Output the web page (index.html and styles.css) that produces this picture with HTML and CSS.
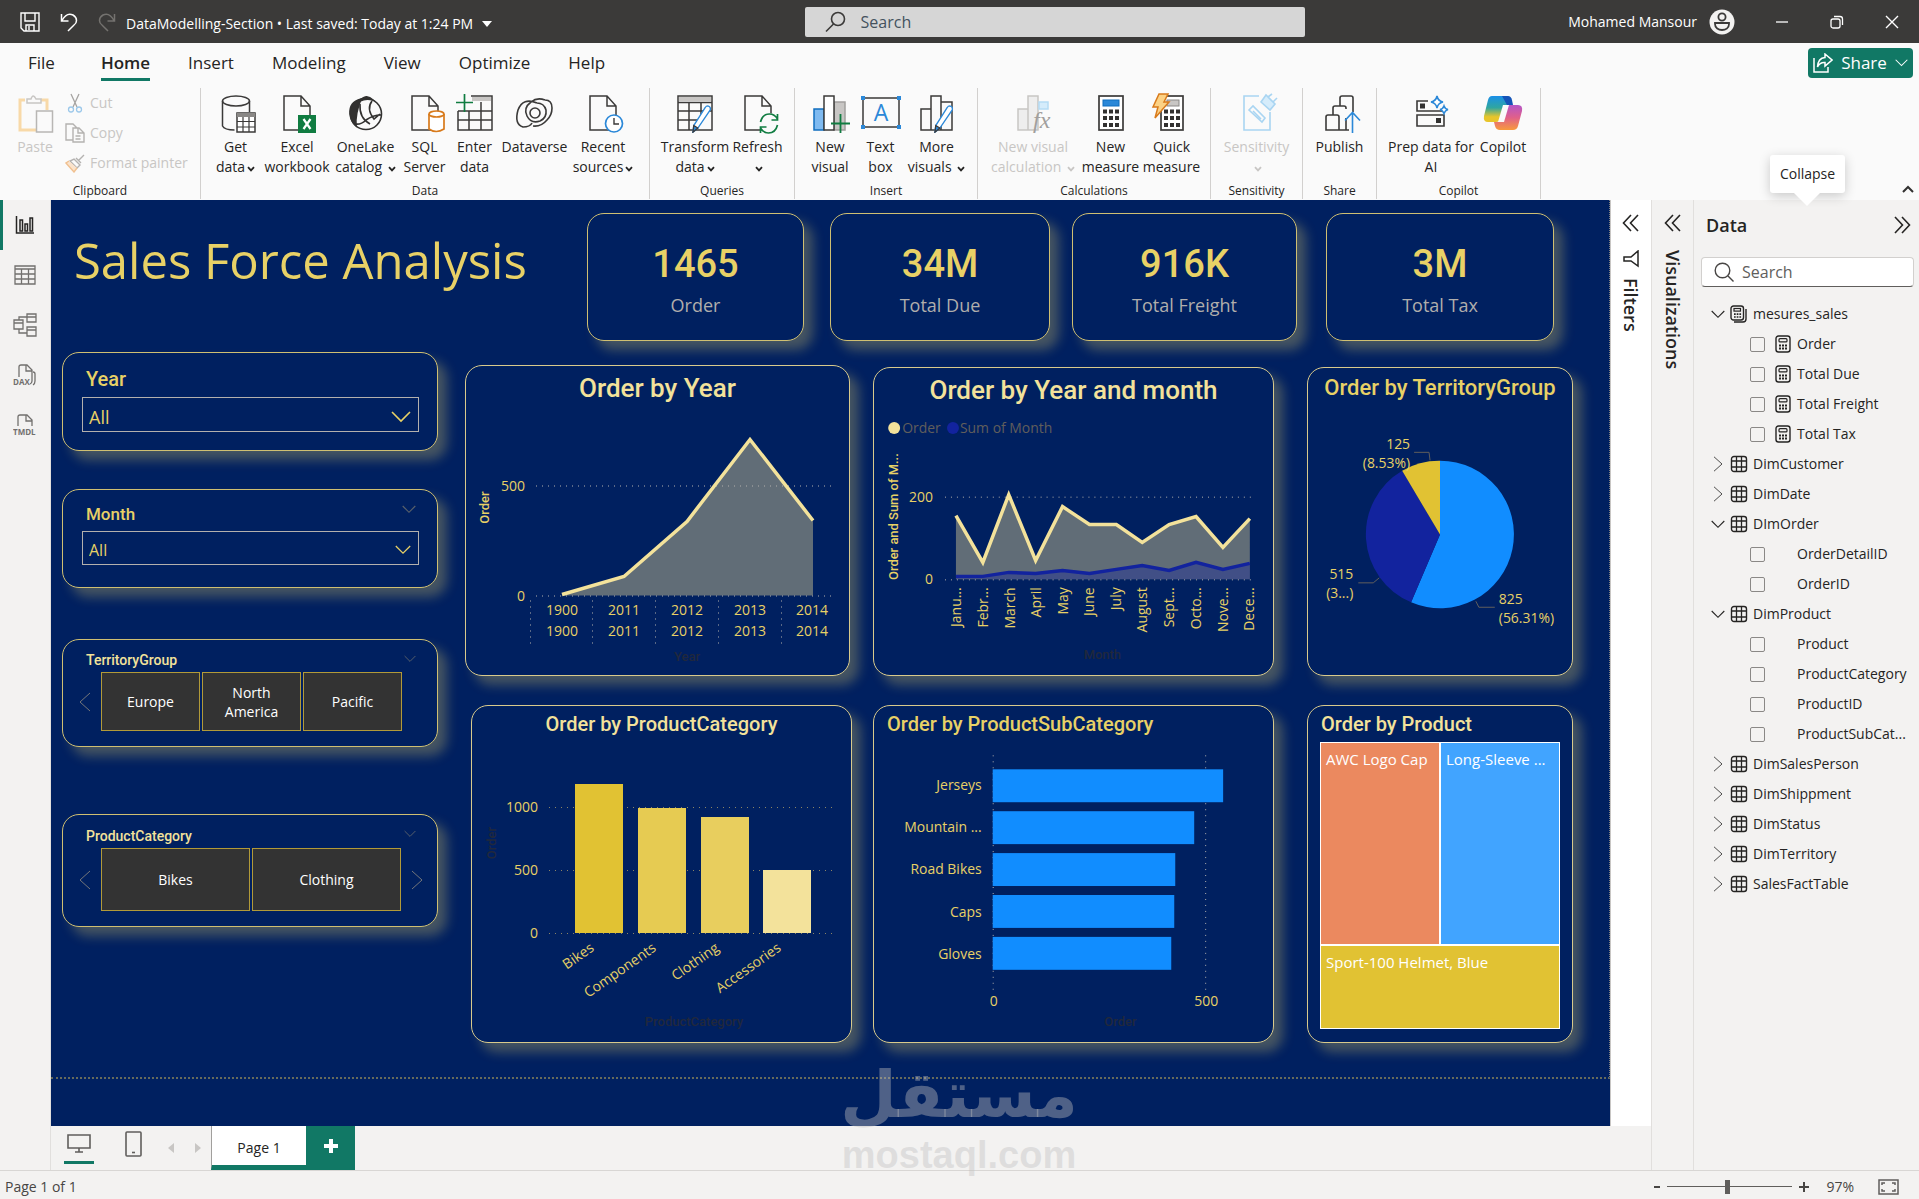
FILE: index.html
```html
<!DOCTYPE html>
<html lang="en">
<head>
<meta charset="utf-8">
<title>DataModelling-Section</title>
<meta name="viewport" content="width=device-width, initial-scale=1">
<link rel="stylesheet" href="styles.css">
</head>
<body>
<svg class="defs" aria-hidden="true">
  <symbol id="chev" viewBox="0 0 8 6"><path d="M1 1.2 4 4.4 7 1.2" fill="none" stroke="currentColor" stroke-width="1.8"/></symbol>
  <symbol id="down" viewBox="0 0 20 12"><path d="M1 1 10 10 19 1" fill="none" stroke="currentColor" stroke-width="1.6"/></symbol>
  <symbol id="left" viewBox="0 0 12 20"><path d="M11 1 1 10 11 19" fill="none" stroke="currentColor"/></symbol>
  <symbol id="dbl" viewBox="0 0 18 18"><path d="M9 1 1.500 9 9 17M16 1 8.500 9 16 17" fill="none" stroke="currentColor" stroke-width="1.600"/></symbol>
  <symbol id="table" viewBox="0 0 18 18"><rect x="1.500" y="1.500" width="15" height="15" rx="2.500" fill="none" stroke="currentColor" stroke-width="1.400"/><path d="M6.500 1.500v15M11.500 1.500v15M1.500 6h15M1.500 12h15" stroke="currentColor" stroke-width="1.300"/></symbol>
  <symbol id="calc" viewBox="0 0 18 18"><rect x="2" y="1" width="14" height="16" rx="2.500" fill="none" stroke="currentColor" stroke-width="1.400"/><rect x="5" y="3.700" width="8" height="3.200" rx="1" fill="none" stroke="currentColor" stroke-width="1.200"/><path d="M5 10.500h2m1 0h2m1 0h2M5 13.500h2m1 0h2m1 0h2" stroke="currentColor" stroke-width="1.900"/></symbol>
  <symbol id="calcs" viewBox="0 0 18 18"><rect x="1" y="1" width="12.500" height="14" rx="2.500" fill="none" stroke="currentColor" stroke-width="1.400"/><path d="M4 17h9q3 0 3-3V4" fill="none" stroke="currentColor" stroke-width="1.400"/><rect x="4" y="3.500" width="6.500" height="2.600" fill="none" stroke="currentColor" stroke-width="1.200"/><path d="M4 9.200h1.700m1 0h1.700m1 0h1.700M4 12h1.700m1 0h1.700m1 0h1.700" stroke="currentColor" stroke-width="1.700"/></symbol>
  <symbol id="doc" viewBox="0 0 40 40"><path d="M24 2H7v34h26V12zM24 2v10h9" fill="none" stroke="currentColor" stroke-width="1.500"/></symbol>
  <symbol id="pencil" viewBox="0 0 24 34"><path d="M19 1q4 1 3 5L7 28l-6 5 1-8L16 3q1-2 3-2z" fill="#fff" stroke="#2b88d8" stroke-width="1.600"/><path d="M2 25l5 3-6 5z" fill="#2b88d8"/></symbol>
</svg>

<header class="titlebar">
  <div class="quick">
    <button aria-label="Save"><svg width="20" height="20" viewBox="0 0 20 20" fill="none" stroke="#fff" stroke-width="1.400"><path d="M1 1h18v18H4l-3-3zM5 1v8h10V1M6 19v-6h8v6M9 14v4"/></svg></button>
    <button aria-label="Undo"><svg width="18" height="20" viewBox="0 0 18 20" fill="none" stroke="#fff" stroke-width="1.500"><path d="M1.500 2v7h7M2 8.500C5 3 9 1 13 3c5 3 4 8 1 10L8 19"/></svg></button>
    <button aria-label="Redo"><svg width="18" height="20" viewBox="0 0 18 20" fill="none" stroke="#74726f" stroke-width="1.500"><path d="M16.500 2v7h-7M16 8.500C13 3 9 1 5 3C0 6 1 11 4 13l6 6"/></svg></button>
    <button class="doc-name">DataModelling-Section • Last saved: Today at 1:24 PM <svg width="10" height="6" viewBox="0 0 10 6"><path d="M0 0h10L5 6z" fill="#fff"/></svg></button>
  </div>
  <label class="top-search"><svg width="22" height="22" viewBox="0 0 22 22" fill="none" stroke="#3b3a39" stroke-width="1.600"><circle cx="13" cy="8" r="6.500"/><path d="M8.500 13 1 20.500"/></svg><input type="text" placeholder="Search" aria-label="Search"></label>
  <div class="account">
    <span>Mohamed Mansour</span>
    <svg class="avatar" width="26" height="26" viewBox="0 0 26 26"><circle cx="13" cy="13" r="12.500" fill="#f3f2f1"/><circle cx="13" cy="8" r="3.600" fill="none" stroke="#3b3a39" stroke-width="1.800"/><path d="M6 14h14v1c0 8-14 8-14 0z" fill="none" stroke="#3b3a39" stroke-width="1.800"/></svg>
    <button aria-label="Minimize"><svg width="14" height="14" viewBox="0 0 14 14"><path d="M1 7h12" stroke="#fff" stroke-width="1.300"/></svg></button>
    <button aria-label="Restore"><svg width="14" height="14" viewBox="0 0 14 14" fill="none" stroke="#fff" stroke-width="1.300"><rect x="1" y="4" width="9" height="9" rx="2"/><path d="M4 1.500h6q2.500 0 2.500 2.500v6"/></svg></button>
    <button aria-label="Close"><svg width="14" height="14" viewBox="0 0 14 14"><path d="M1 1l12 12M13 1 1 13" stroke="#fff" stroke-width="1.400"/></svg></button>
  </div>
</header>

<nav class="tabs">
  <a href="#file" class="file">File</a><a href="#home" class="on">Home</a><a href="#insert">Insert</a><a href="#modeling">Modeling</a><a href="#view">View</a><a href="#optimize">Optimize</a><a href="#help">Help</a>
  <button class="share"><svg width="20" height="20" viewBox="0 0 20 20" fill="none" stroke="#fff" stroke-width="1.500"><path d="M1 5v14h14v-5M12 1l7 6-7 6V9.500Q7 9 4.500 14 5 5 12 4.500z"/></svg>Share<svg width="13" height="8"><use href="#down"/></svg></button>
</nav>

<section class="ribbon" aria-label="Ribbon">
  <div class="group g-clip">
    <div class="tools">
      <button class="tool w-paste off"><svg class="ic" viewBox="0 0 40 40" fill="none"><path d="M10 6H5v30h16M26 6h6v10" stroke="#f8d9a8" stroke-width="3"/><path d="M12 9V5h4q2-6 5 0h5v4z" stroke="#c8c6c4" stroke-width="1.500"/><rect x="21.500" y="17" width="16" height="21" fill="#fafafa" stroke="#b8b6b4" stroke-width="1.500"/></svg>Paste</button>
      <div class="mini off">
        <button><svg width="20" height="20" viewBox="0 0 20 20" fill="none" stroke="#a6a4a2" stroke-width="1.300"><path d="M6 1l6 13M14 1 8 14"/><circle cx="6" cy="16.500" r="2.500" stroke="#9cc8ea"/><circle cx="14" cy="16.500" r="2.500" stroke="#9cc8ea"/></svg>Cut</button>
        <button><svg width="20" height="20" viewBox="0 0 20 20" fill="none" stroke="#b4b2b0" stroke-width="1.400"><path d="M8 17H1V1h7l4 4M8 5h6l5 5v9H8zM13 5v5h6M10.500 13h5M10.500 16h5"/></svg>Copy</button>
        <button><svg width="20" height="20" viewBox="0 0 20 20" fill="none" stroke="#b4b2b0" stroke-width="1.400"><path d="M19 2l-6 6M11 5l5 5M9 6l6 6-3 3-7-7z"/><path d="M4 8 1 10l8 9 3-4" stroke="#f0c090" fill="#fbe3cb"/></svg>Format painter</button>
      </div>
    </div>
    <h2>Clipboard</h2>
  </div>
  <div class="group g-data">
    <div class="tools">
      <button class="tool w57"><svg class="ic" viewBox="0 0 40 40" fill="none" stroke="#3b3a39" stroke-width="1.500"><path d="M6.500 7v25q2 4 12 4M33.500 7v11"/><ellipse cx="20" cy="7" rx="13.500" ry="5"/><rect x="21" y="19" width="18" height="19" fill="#fff"/><path d="M21 21h18" stroke-width="4" stroke="#8a8886"/><path d="M21 27.500h18M21 33h18M27 23v15M33 23v15" stroke-width="1.200"/></svg>Get<br>data<svg class="cv"><use href="#chev"/></svg></button>
      <button class="tool w66"><svg class="ic" viewBox="0 0 40 40"><use href="#doc"/><rect x="21" y="21" width="18" height="18" fill="#107c41"/><path d="M26.500 25l7 10M33.500 25l-7 10" stroke="#fff" stroke-width="2.200"/></svg>Excel<br>workbook</button>
      <button class="tool w71"><svg class="ic" viewBox="0 0 40 40" fill="none" stroke="#323130" stroke-width="1.600"><circle cx="20" cy="20" r="15.500"/><path d="M15 5Q3 8 4 20q1 8 6 12Q9 20 15 5z" fill="#323130"/><path d="M14 7Q20-1 27 6q-7-2-13 1z" fill="#323130"/><path d="M14 10q-1 14 10 20M26 7q-6 8 2 18l6-5M9 30q6 1 11-4 7-5 15-5"/></svg>OneLake<br>catalog <svg class="cv"><use href="#chev"/></svg></button>
      <button class="tool w47"><svg class="ic" viewBox="0 0 40 40" fill="none"><use href="#doc"/><path d="M24 20v15q7 5 15 0V20" fill="#fff" stroke="#d87a1b" stroke-width="1.700"/><ellipse cx="31.500" cy="20" rx="7.500" ry="3" fill="#fff" stroke="#d87a1b" stroke-width="1.700"/></svg>SQL<br>Server</button>
      <button class="tool w53"><svg class="ic" viewBox="0 0 40 40" fill="none" stroke="#3b3a39" stroke-width="1.500"><path d="M16 2h21v34H3V17M3 26h34M3 17h34M14 17v19M26 8v28"/><path d="M17 5h19" stroke="#c8c6c4" stroke-width="4"/><path d="M9.500 0v18M1 8.500h17" stroke="#107c41" stroke-width="1.700"/></svg>Enter<br>data</button>
      <button class="tool w67"><svg class="ic" viewBox="0 0 40 40" fill="none" stroke="#3b3a39" stroke-width="1.600"><path d="M30 6Q22 3 16 8 8 14 12 22q4 8 13 5 7-3 6-11-2-7-9-7M30 6q7 0 7 8 0 7-5 12-6 7-14 6M22 9Q8 3 3 16q-4 14 5 17 7 0 9-4"/><circle cx="20" cy="19" r="5"/></svg>Dataverse</button>
      <button class="tool w70"><svg class="ic" viewBox="0 0 40 40"><use href="#doc"/><circle cx="31" cy="29.500" r="8.500" fill="#fff" stroke="#2b88d8" stroke-width="1.700"/><path d="M31 24v6h5" fill="none" stroke="#3b3a39" stroke-width="1.400"/></svg>Recent<br>sources<svg class="cv"><use href="#chev"/></svg></button>
    </div>
    <h2>Data</h2>
  </div>
  <div class="group g-query">
    <div class="tools">
      <button class="tool w71"><svg class="ic" viewBox="0 0 40 40" fill="none" stroke="#3b3a39" stroke-width="1.500"><rect x="3" y="2" width="34" height="34"/><path d="M4 5h32" stroke="#c8c6c4" stroke-width="4"/><path d="M3 8.500h34M3 17h34M3 26h20M14 8v28M26 8v14"/><use href="#pencil" x="14" y="11" width="26" height="28"/></svg>Transform<br>data<svg class="cv"><use href="#chev"/></svg></button>
      <button class="tool w54"><svg class="ic" viewBox="0 0 40 40" fill="none"><use href="#doc"/><circle cx="31" cy="29.500" r="10.500" fill="#fafafa"/><path d="M22.500 28q2-8 9-8 5 0 8 5M39.500 20v6h-6M39.500 31q-2 8-9 8-5 0-8-5M22.500 39v-6h6" stroke="#107c41" stroke-width="1.700"/></svg>Refresh<br><svg class="cv"><use href="#chev"/></svg></button>
    </div>
    <h2>Queries</h2>
  </div>
  <div class="group g-insert">
    <div class="tools">
      <button class="tool w51"><svg class="ic" viewBox="0 0 40 40" stroke-width="1.500"><rect x="24" y="8" width="11" height="28" fill="#c8c6c4" stroke="#a19f9d"/><rect x="4" y="15" width="10" height="21" fill="#7fbaf0" stroke="#106ebe"/><rect x="14" y="2" width="10" height="34" fill="#fff" stroke="#3b3a39"/><path d="M30.500 20v19M21 29.500h19" stroke="#107c41" stroke-width="1.800"/></svg>New<br>visual</button>
      <button class="tool w50"><svg class="ic" viewBox="0 0 40 40"><rect x="2" y="4" width="36" height="29" fill="none" stroke="#3b3a39" stroke-width="1.500"/><path d="M0 2h4v4H0zM36 2h4v4h-4zM0 31h4v4H0zM36 31h4v4h-4z" fill="#2b88d8"/><text x="20" y="27" text-anchor="middle" font-size="23" fill="#2b88d8">A</text></svg>Text<br>box</button>
      <button class="tool w62"><svg class="ic" viewBox="0 0 40 40" fill="none" stroke="#3b3a39" stroke-width="1.500"><path d="M4 15h10v21H4zM14 2h10v34H14zM24 8h11v28H24z"/><use href="#pencil" x="14" y="11" width="26" height="28"/></svg>More<br>visuals <svg class="cv"><use href="#chev"/></svg></button>
    </div>
    <h2>Insert</h2>
  </div>
  <div class="group g-calc">
    <div class="tools">
      <button class="tool w91 off"><svg class="ic" viewBox="0 0 40 40" stroke-width="1.500"><path d="M5 15h10v21H5zM15 2h10v34H15z" fill="#eee" stroke="#c8c6c4"/><path d="M26 8h9v7h-9z" fill="#d5ecfb" stroke="#b5dcf5"/><text x="20" y="34" font-size="24" font-style="italic" fill="#a19f9d" class="serif">fx</text></svg>New visual<br>calculation <svg class="cv"><use href="#chev"/></svg></button>
      <button class="tool w64"><svg class="ic" viewBox="0 0 40 40"><rect x="8" y="2" width="24" height="34" fill="#fff" stroke="#3b3a39" stroke-width="1.700"/><rect x="12" y="6" width="16" height="6" fill="#2b88d8" stroke="#106ebe"/><path d="M12 17.500h4m2 0h4m2 0h4M12 24h4m2 0h4m2 0h4M12 31h4m2 0h4m2 0h4" stroke="#323130" stroke-width="4"/></svg>New<br>measure</button>
      <button class="tool w58"><svg class="ic" viewBox="0 0 40 40"><rect x="9" y="2" width="22" height="34" fill="#fff" stroke="#3b3a39" stroke-width="1.700"/><rect x="15" y="6" width="12" height="6" fill="#c8c6c4" stroke="#8a8886"/><path d="M12 17.500h4m2 0h4m2 0h4M12 24h4m2 0h4m2 0h4M12 31h4m2 0h4m2 0h4" stroke="#323130" stroke-width="4"/><path d="M7 0h9l-4 8h5L3 24l3-11H1z" fill="#fcd285" stroke="#d87a1b" stroke-width="1.500"/></svg>Quick<br>measure</button>
    </div>
    <h2>Calculations</h2>
  </div>
  <div class="group g-sens">
    <div class="tools">
      <button class="tool w91 off"><svg class="ic" viewBox="0 0 40 40" fill="none" stroke="#a9d5f2" stroke-width="1.600"><path d="M22 2H7v34h26V18"/><path d="M24 8l5-7 9 9-5 6zM31 3l4-3M36 8l4-4" fill="#d5ecfb"/><path d="M12 16l4-4 12 12-3 4zM16 17l8 8"/></svg>Sensitivity<br><svg class="cv"><use href="#chev"/></svg></button>
    </div>
    <h2>Sensitivity</h2>
  </div>
  <div class="group g-share">
    <div class="tools">
      <button class="tool w64"><svg class="ic" viewBox="0 0 40 40" fill="none" stroke="#3b3a39" stroke-width="1.600"><path d="M33 18V4q0-2-2-2H22q-2 0-2 2v8M26 15v-1q0-2-2-2h-9q-2 0-2 2v7M6 36V23q0-2 2-2h9q2 0 2 2v13zM19 36h7V24M26 36h3"/><path d="M32.500 39V19M25 26.500l7.500-8 7.500 8" stroke="#2b88d8"/></svg>Publish</button>
    </div>
    <h2>Share</h2>
  </div>
  <div class="group g-copilot">
    <div class="tools">
      <button class="tool w96"><svg class="ic" viewBox="0 0 40 40" fill="none" stroke="#3b3a39" stroke-width="1.600"><path d="M17 7H6v10h27V15M6 21h27v11H6z"/><path d="M9 9.500h5v5H9zM25 24h5v5h-5z" fill="#323130" stroke="none"/><path d="M26 2q1 5 6 6-5 1-6 6-1-5-6-6 5-1 6-6zM33 12q1 3 4 3.500-3 1-4 4-1-3-4-4 3-.5 4-3.500z" fill="#fff" stroke="#2b88d8"/></svg>Prep data for<br>AI</button>
      <button class="tool w48"><svg class="ic" viewBox="0 0 40 40"><defs><linearGradient id="ga" x1="0" y1="0" x2="0" y2="1"><stop offset="0" stop-color="#1a8fe8"/><stop offset=".45" stop-color="#2fa6a0"/><stop offset=".8" stop-color="#e8c52a"/></linearGradient><linearGradient id="gb" x1="0" y1="0" x2="0" y2="1"><stop offset="0" stop-color="#b455c8"/><stop offset=".5" stop-color="#e0608a"/><stop offset="1" stop-color="#f89a3c"/></linearGradient></defs><path d="M9 2h14q3 0 4 3l2 6h-4q-4 0-5 4l-3 10q-1 3-4 3H5q-5 0-4-6L5 6q1-4 4-4z" fill="url(#ga)"/><path d="M19 2h6q3 0 4 4l1 5h-6z" fill="#1454b8"/><path d="M27 11h8q5 0 4 6l-4 15q-1 4-5 4H17q-4 0-5-4l-1-4h3q3 0 4-3l4-11q1-3 5-3z" fill="url(#gb)"/><path d="M20 11h6l-5 17h-6z" fill="#fafafa"/></svg>Copilot</button>
    </div>
    <h2>Copilot</h2>
  </div>
  <button class="fold" aria-label="Collapse the ribbon"><svg width="12" height="8" viewBox="0 0 12 8"><path d="M1 7l5-5 5 5" fill="none" stroke="#323130" stroke-width="2"/></svg></button>
</section>

<main class="main">
  <nav class="rail" aria-label="Views">
    <a href="#report" class="on" aria-label="Report view"><svg width="20" height="20" viewBox="0 0 20 20" fill="none" stroke="#252423" stroke-width="1.500"><path d="M1.500 1v17H19"/><path d="M5 5h2.500v11H5zM10 9h2.500v7H10zM15 3h2.500v13H15z"/></svg></a>
    <a href="#table" aria-label="Table view"><svg width="22" height="20" viewBox="0 0 22 20" fill="none" stroke="#72706e" stroke-width="1.300"><path d="M1 1h20v18H1zM1 4h20M1 9h20M1 14h20M7.500 4v15M14.500 4v15"/></svg></a>
    <a href="#model" aria-label="Model view"><svg width="24" height="24" viewBox="0 0 24 24" fill="none" stroke="#72706e" stroke-width="1.300"><path d="M14 1h9v8h-9zM14 4h9M1 7h9v9H1zM1 10h9M14 14h9v9h-9zM14 17h9M14 4H6v3M6 16v4h8"/></svg></a>
    <a href="#dax" aria-label="DAX query view"><svg width="24" height="22" viewBox="0 0 24 22" fill="none" stroke="#72706e" stroke-width="1.300"><path d="M6 13V3q0-2 2-2h6l5 5v11q0 2-2 3M13 1v6h6M20 8q2 0 2 2v7q0 3-2 4"/><text x="0" y="21" font-size="8" font-weight="700" fill="#72706e" stroke="none">DAX</text></svg></a>
    <a href="#tmdl" aria-label="TMDL view"><svg width="24" height="22" viewBox="0 0 24 22" fill="none" stroke="#72706e" stroke-width="1.300"><path d="M5 12V3q0-2 2-2h7l5 5v6M13 1v6h6"/><text x="0" y="21" font-size="8" font-weight="700" fill="#72706e" stroke="none">TMDL</text></svg></a>
  </nav>

  <div class="workspace">
    <div class="stage">
      <div class="canvas">
        <div class="report">
          <div class="top">
            <h1>Sales Force Analysis</h1>
            <div class="kpis">
              <div class="card kpi"><strong>1465</strong><span>Order</span></div>
              <div class="card kpi"><strong>34M</strong><span>Total Due</span></div>
              <div class="card kpi"><strong>916K</strong><span>Total Freight</span></div>
              <div class="card kpi"><strong>3M</strong><span>Total Tax</span></div>
            </div>
          </div>
          <div class="body">
            <div class="slicers">
              <div class="card slicer year">
                <label for="year">Year</label>
                <div class="pick"><select id="year"><option>All</option></select><svg width="20" height="12"><use href="#down"/></svg></div>
              </div>
              <div class="card slicer month">
                <label for="month">Month</label><svg class="hd" width="14" height="9"><use href="#down"/></svg>
                <div class="pick"><select id="month"><option>All</option></select><svg width="16" height="10"><use href="#down"/></svg></div>
              </div>
              <div class="card slicer terr">
                <h3>TerritoryGroup</h3><svg class="hd" width="12" height="8"><use href="#down"/></svg>
                <div class="tiles"><svg width="12" height="20"><use href="#left"/></svg><button>Europe</button><button>North<br>America</button><button>Pacific</button><i></i></div>
              </div>
              <div class="card slicer cat">
                <h3>ProductCategory</h3><svg class="hd" width="12" height="8"><use href="#down"/></svg>
                <div class="tiles"><svg width="12" height="20"><use href="#left"/></svg><button>Bikes</button><button>Clothing</button><svg class="flip" width="12" height="20"><use href="#left"/></svg></div>
              </div>
            </div>

            <div class="charts">
              <div class="card chart c-year">
                <h2 class="big pale">Order by Year</h2>
                <svg class="plot" viewBox="466 408 383 266">
                  <polygon points="562,595 624,577 687,521 750,439 813,520 813,595" fill="#f3e29b" fill-opacity=".4"/>
                  <g class="grid"><path d="M536 485.500h300M536 595.500h300M530.500 600v44M592.500 600v44M655.500 600v44M718.500 600v44M781.500 600v44"/></g>
                  <polyline points="562,594 624,576 687,521 750,439 813,520" fill="none" stroke="#f3e29b" stroke-width="3.500"/>
                  <g class="end"><text x="525" y="490">500</text><text x="525" y="600">0</text></g>
                  <g class="mid"><text x="562" y="614">1900</text><text x="624" y="614">2011</text><text x="687" y="614">2012</text><text x="750" y="614">2013</text><text x="812" y="614">2014</text>
                  <text x="562" y="635">1900</text><text x="624" y="635">2011</text><text x="687" y="635">2012</text><text x="750" y="635">2013</text><text x="812" y="635">2014</text>
                  <text x="687" y="660" class="dim">Year</text><text transform="translate(489 507) rotate(-90)" class="axis">Order</text></g>
                </svg>
              </div>
              <div class="card chart c-month">
                <h2 class="big pale">Order by Year and month</h2>
                <svg class="plot" viewBox="874 410 400 266">
                  <circle cx="894" cy="428" r="6" fill="#f3e29b"/><text x="902" y="433" class="leg">Order</text>
                  <circle cx="953" cy="428" r="6" fill="#12239e"/><text x="960" y="433" class="leg">Sum of Month</text>
                  <polygon points="956,580 956,516 983,563 1009,495 1036,561 1063,507 1090,525 1117,525 1143,543 1170,525 1197,517 1224,548 1251,519 1251,580" fill="#f3e29b" fill-opacity=".4"/>
                  <polygon points="956,580 956,577 983,577 1009,573 1036,574 1063,571 1090,574 1117,570 1143,566 1170,571 1197,563 1224,570 1251,564 1251,580" fill="#12239e" fill-opacity=".4"/>
                  <g class="grid"><path d="M945 497.500h312M945 580.500h312"/></g>
                  <polyline points="956,516 983,563 1009,495 1036,561 1063,507 1090,525 1117,525 1143,543 1170,525 1197,517 1224,548 1251,519" fill="none" stroke="#f3e29b" stroke-width="3.500"/>
                  <polyline points="956,577 983,577 1009,573 1036,574 1063,571 1090,574 1117,570 1143,566 1170,571 1197,563 1224,570 1251,564" fill="none" stroke="#12239e" stroke-width="3.500"/>
                  <g class="end"><text x="933" y="502">200</text><text x="933" y="585">0</text>
                  <text transform="translate(961 588) rotate(-90)">Janu...</text><text transform="translate(988 588) rotate(-90)">Febr...</text><text transform="translate(1015 588) rotate(-90)">March</text><text transform="translate(1041 588) rotate(-90)">April</text><text transform="translate(1068 588) rotate(-90)">May</text><text transform="translate(1095 588) rotate(-90)">June</text><text transform="translate(1122 588) rotate(-90)">July</text><text transform="translate(1148 588) rotate(-90)">August</text><text transform="translate(1175 588) rotate(-90)">Sept...</text><text transform="translate(1202 588) rotate(-90)">Octo...</text><text transform="translate(1229 588) rotate(-90)">Nove...</text><text transform="translate(1255 588) rotate(-90)">Dece...</text></g>
                  <g class="mid"><text x="1103" y="660" class="dim">Month</text><text transform="translate(898 517) rotate(-90)" class="axis">Order and Sum of M...</text></g>
                </svg>
              </div>
              <div class="card chart c-terr">
                <h2 class="wide">Order by TerritoryGroup</h2>
                <svg class="plot" viewBox="1308 410 264 266">
                  <path d="M1440 535V461A74 74 0 1 1 1411 603z" fill="#118dff"/>
                  <path d="M1440 535 1411 603A74 74 0 0 1 1402 471z" fill="#12239e"/>
                  <path d="M1440 535 1402 471A74 74 0 0 1 1440 461z" fill="#e1c233"/>
                  <path d="M1414 452.500h15l1 8M1358 583.500h15l6-5M1476 602l3 6h16" fill="none" stroke="#605e5c"/>
                  <g class="end"><text x="1410" y="449">125</text><text x="1410" y="468">(8.53%)</text><text x="1353" y="580">515</text><text x="1353" y="599">(3...)</text></g>
                  <g class="start"><text x="1499" y="605">825</text><text x="1499" y="624">(56.31%)</text></g>
                </svg>
              </div>
              <div class="card chart c-cat">
                <h2 class="pale">Order by ProductCategory</h2>
                <svg class="plot" viewBox="472 742 379 300">
                  <g class="grid warm"><path d="M549 807.500h288M549 870.500h288M549 933.500h288"/></g>
                  <rect x="575" y="784" width="48" height="149" fill="#e1c233"/><rect x="638" y="808" width="48" height="125" fill="#e6cb52"/><rect x="701" y="817" width="48" height="116" fill="#e8ce5e"/><rect x="763" y="870" width="48" height="63" fill="#f3e29b"/>
                  <g class="end"><text x="538" y="812">1000</text><text x="538" y="875">500</text><text x="538" y="938">0</text>
                  <text transform="translate(595 950) rotate(-35)">Bikes</text><text transform="translate(657 950) rotate(-35)">Components</text><text transform="translate(720 950) rotate(-35)">Clothing</text><text transform="translate(782 950) rotate(-35)">Accessories</text></g>
                  <g class="mid"><text x="694" y="1026" class="dim">ProductCategory</text><text transform="translate(496 843) rotate(-90)" class="dim">Order</text></g>
                </svg>
              </div>
              <div class="card chart c-sub">
                <h2 class="lead">Order by ProductSubCategory</h2>
                <svg class="plot" viewBox="874 742 400 300">
                  <g class="grid"><path d="M993.500 755v235M1206.500 755v235"/></g>
                  <g fill="#118dff"><rect x="993" y="769" width="231" height="33"/><rect x="993" y="811" width="202" height="33"/><rect x="993" y="853" width="183" height="33"/><rect x="993" y="895" width="182" height="33"/><rect x="993" y="937" width="179" height="33"/></g>
                  <g class="end"><text x="982" y="790">Jerseys</text><text x="982" y="832">Mountain ...</text><text x="982" y="874">Road Bikes</text><text x="982" y="917">Caps</text><text x="982" y="959">Gloves</text></g>
                  <g class="mid"><text x="994" y="1006">0</text><text x="1207" y="1006">500</text><text x="1121" y="1026" class="dim">Order</text></g>
                </svg>
              </div>
              <div class="card chart c-prod">
                <h2 class="lead pale">Order by Product</h2>
                <div class="treemap"><div class="t1">AWC Logo Cap</div><div class="t2">Long-Sleeve ...</div><div class="t3">Sport-100 Helmet, Blue</div></div>
              </div>
            </div>
          </div>
        </div>
      </div>
      <aside class="pane filters">
        <svg width="18" height="18"><use href="#dbl"/></svg>
        <svg width="18" height="18" viewBox="0 0 18 18"><path d="M16 1v15L9 11H2V7h7z" fill="none" stroke="#252423" stroke-width="1.500"/></svg>
        <h2>Filters</h2>
      </aside>
    </div>
    <div class="pages">
      <button class="view on" aria-label="Desktop layout"><svg width="24" height="19" viewBox="0 0 24 19" fill="none" stroke="#605e5c" stroke-width="1.600"><path d="M1 1h22v13H1zM12 14v4M8 18h8"/></svg></button>
      <button class="view phone" aria-label="Mobile layout"><svg width="17" height="26" viewBox="0 0 17 26" fill="none" stroke="#605e5c" stroke-width="1.600"><rect x="1" y="1" width="15" height="24" rx="1"/><path d="M7 21.500h3"/></svg></button>
      <button class="arrow" aria-label="Previous page"><svg width="6" height="10"><path d="M6 0v10L0 5z" fill="#c8c6c4"/></svg></button>
      <button class="arrow" aria-label="Next page"><svg width="6" height="10"><path d="M0 0v10l6-5z" fill="#c8c6c4"/></svg></button>
      <a href="#page1" class="page">Page 1</a>
      <button class="add" aria-label="New page"><svg width="14" height="14"><path d="M7 0v14M0 7h14" stroke="#fff" stroke-width="4"/></svg></button>
    </div>
    <div class="watermark"><span lang="ar" dir="rtl">مستقل</span><b>mostaql.com</b></div>
  </div>

  <aside class="pane viz">
    <svg width="18" height="18"><use href="#dbl"/></svg>
    <h2>Visualizations</h2>
  </aside>

  <aside class="data">
    <div class="tip">Collapse</div>
    <header><h2>Data</h2><svg class="flip" width="18" height="18"><use href="#dbl"/></svg></header>
    <label class="find"><svg width="20" height="20" viewBox="0 0 20 20" fill="none" stroke="#484644" stroke-width="1.400"><circle cx="8.500" cy="8.500" r="7.300"/><path d="M14 14l5.500 5.500"/></svg><input type="text" placeholder="Search" aria-label="Search fields"></label>
    <ul class="tree">
      <li><svg class="open"><use href="#down"/></svg><svg class="ti"><use href="#calcs"/></svg>mesures_sales</li>
      <li class="kid"><label><input type="checkbox"><svg class="ti"><use href="#calc"/></svg>Order</label></li>
      <li class="kid"><label><input type="checkbox"><svg class="ti"><use href="#calc"/></svg>Total Due</label></li>
      <li class="kid"><label><input type="checkbox"><svg class="ti"><use href="#calc"/></svg>Total Freight</label></li>
      <li class="kid"><label><input type="checkbox"><svg class="ti"><use href="#calc"/></svg>Total Tax</label></li>
      <li><svg class="shut"><use href="#left"/></svg><svg class="ti"><use href="#table"/></svg>DimCustomer</li>
      <li><svg class="shut"><use href="#left"/></svg><svg class="ti"><use href="#table"/></svg>DimDate</li>
      <li><svg class="open"><use href="#down"/></svg><svg class="ti"><use href="#table"/></svg>DImOrder</li>
      <li class="kid"><label><input type="checkbox"><i class="ti"></i>OrderDetailID</label></li>
      <li class="kid"><label><input type="checkbox"><i class="ti"></i>OrderID</label></li>
      <li><svg class="open"><use href="#down"/></svg><svg class="ti"><use href="#table"/></svg>DimProduct</li>
      <li class="kid"><label><input type="checkbox"><i class="ti"></i>Product</label></li>
      <li class="kid"><label><input type="checkbox"><i class="ti"></i>ProductCategory</label></li>
      <li class="kid"><label><input type="checkbox"><i class="ti"></i>ProductID</label></li>
      <li class="kid"><label><input type="checkbox"><i class="ti"></i>ProductSubCat...</label></li>
      <li><svg class="shut"><use href="#left"/></svg><svg class="ti"><use href="#table"/></svg>DimSalesPerson</li>
      <li><svg class="shut"><use href="#left"/></svg><svg class="ti"><use href="#table"/></svg>DimShippment</li>
      <li><svg class="shut"><use href="#left"/></svg><svg class="ti"><use href="#table"/></svg>DimStatus</li>
      <li><svg class="shut"><use href="#left"/></svg><svg class="ti"><use href="#table"/></svg>DimTerritory</li>
      <li><svg class="shut"><use href="#left"/></svg><svg class="ti"><use href="#table"/></svg>SalesFactTable</li>
    </ul>
  </aside>
</main>

<footer class="status">
  <span>Page 1 of 1</span>
  <div class="zoom">
    <button aria-label="Zoom out"><svg width="6" height="12"><path d="M0 6h6" stroke="#484644" stroke-width="2"/></svg></button>
    <input type="range" min="10" max="190" value="97" aria-label="Zoom level">
    <button aria-label="Zoom in"><svg width="10" height="12"><path d="M0 6h10M5 1v10" stroke="#484644" stroke-width="2"/></svg></button>
    <span>97%</span>
    <button aria-label="Fit to page"><svg width="21" height="16" viewBox="0 0 21 16" fill="none" stroke="#605e5c" stroke-width="1.500"><path d="M1 1h19v14H1zM4 6V4h3M14 4h3v2M4 10v2h3M14 12h3v-2"/></svg></button>
  </div>
</footer>
</body>
</html>
```

FILE: styles.css
```css
* { box-sizing: border-box; }
body {
  margin: 0;
  min-height: 100vh;
  display: flex;
  flex-direction: column;
  font: 14px/20px "Open Sans", "Noto Sans", sans-serif;
  color: #252423;
  background: #f3f2f1;
}
h1, h2, h3, ul { margin: 0; padding: 0; font: inherit; list-style: none; }
button, input, select { font: inherit; color: inherit; border: 0; padding: 0; margin: 0; background: none; }
a { color: inherit; text-decoration: none; }
svg { display: block; flex: none; }
.defs { position: absolute; width: 0; height: 0; }
.flip { transform: scaleX(-1); }

/* title bar */
.titlebar {
  height: 43px;
  display: grid;
  grid-template-columns: 132fr 500px 100fr;
  align-items: center;
  background: #3b3a39;
  color: #fff;
  padding: 0 20px;
}
.quick { display: flex; align-items: center; gap: 20px; }
.doc-name { display: flex; align-items: center; gap: 9px; margin: 5px 0 0 -10px; white-space: nowrap; }
.top-search {
  height: 30px;
  display: flex;
  align-items: center;
  gap: 14px;
  padding: 0 20px;
  background: #d6d6d6;
  border-radius: 2px;
}
.top-search input { flex: 1; font-size: 16px; outline: 0; }
.top-search input::placeholder { color: #44525e; opacity: 1; }
.account { display: flex; align-items: center; justify-content: flex-end; }
.avatar { margin: 0 40px 0 12px; }
.account button + button { margin-left: 41px; }

/* ribbon tabs */
.tabs { height: 45px; display: flex; align-items: center; padding: 0 6px 5px 9px; background: #fafafa; font-size: 17px; }
.tabs a { padding: 0 19px; line-height: 30px; }
.tabs .file { margin-right: 8px; }
.tabs .on { font-weight: 600; position: relative; }
.tabs .on::after { content: ""; position: absolute; left: 19px; right: 19px; bottom: -3px; height: 3px; background: #117865; }
.share {
  margin-left: auto;
  width: 105px;
  height: 30px;
  display: flex;
  align-items: center;
  justify-content: center;
  gap: 8px;
  border-radius: 4px;
  background: #117865;
  color: #fff;
}

/* ribbon */
.ribbon { height: 112px; display: flex; background: #fafafa; position: relative; }
.group { display: flex; flex-direction: column; border-right: 1px solid #d2d0ce; height: 111px; padding-top: 6px; }
.group h2 { margin-top: auto; font-size: 12px; line-height: 16px; text-align: center; }
.tools { display: flex; justify-content: center; }
.tool { white-space: nowrap; display: block; text-align: center; align-self: flex-start; }
.ic { width: 40px; height: 40px; margin: 0 auto 3px; overflow: visible; color: #3b3a39; }
.cv { display: inline-block; width: 8px; height: 6px; margin-left: 2px; }
.off { color: #c8c6c4; }
.serif { font-family: "Liberation Serif", serif; }
.g-clip { width: 201px; }
.g-clip .tools { justify-content: flex-start; padding-left: 10px; }
.g-data { width: 449px; }
.g-data .tools, .g-copilot .tools { justify-content: flex-start; padding-left: 6px; }
.g-query { width: 145px; }
.g-insert { width: 183px; }
.g-calc { width: 233px; }
.g-sens { width: 92px; }
.g-share { width: 74px; }
.g-copilot { width: 164px; }
.w-paste { width: 50px; }
.w47 { width: 47px; } .w48 { width: 48px; } .w50 { width: 50px; } .w51 { width: 51px; } .w53 { width: 53px; }
.w54 { width: 54px; } .w57 { width: 57px; } .w58 { width: 58px; } .w62 { width: 62px; } .w64 { width: 64px; }
.w66 { width: 66px; } .w67 { width: 67px; } .w70 { width: 70px; } .w71 { width: 71px; } .w91 { width: 91px; } .w96 { width: 96px; }
.mini { display: flex; flex-direction: column; padding-left: 5px; margin: -6px 0; }
.mini button { display: flex; align-items: center; gap: 5px; height: 30px; white-space: nowrap; }
.fold { position: absolute; right: 5px; bottom: 7px; }

/* main area */
.main { flex: 1; display: flex; }
.rail { width: 51px; border-right: 1px solid #e1dfdd; display: flex; flex-direction: column; }
.rail a { height: 50px; display: grid; place-items: center; }
.rail .on { border-left: 3px solid #117865; padding-right: 3px; }
.workspace { flex: 1; min-width: 0; display: flex; flex-direction: column; position: relative; }
.stage { flex: 1; display: flex; }
.canvas { flex: 1; min-width: 0; background: #002060; overflow: hidden; }
.report { height: 879px; padding: 13px 36px 0 11px; border-bottom: 2px dotted #666a5c; border-right: 1px dotted #808080; color: #e8d166; }
.card {
  border: 1px solid #cfbf72;
  border-radius: 17px;
  background: #002060;
  box-shadow: 9px 9px 12px rgba(232, 209, 102, .3);
}
.top { display: grid; grid-template-columns: 525fr 967fr 19fr; height: 139px; }
.top h1 { padding: 12px 0 0 12px; font-size: 49px; line-height: 70px; white-space: nowrap; }
.kpis { display: grid; grid-template-columns: 217fr 26fr 220fr 22fr 225fr 29fr 228fr; align-items: start; }
.kpi { height: 128px; display: flex; flex-direction: column; align-items: center; padding-top: 29px; }
.kpi:nth-child(2) { grid-column: 3; }
.kpi:nth-child(3) { grid-column: 5; }
.kpi:nth-child(4) { grid-column: 7; }
.kpi strong { font: 500 38px/42px Roboto, sans-serif; }
.kpi span { font-size: 18px; line-height: 24px; margin-top: 8px; color: #b0aeac; }

.body { display: grid; grid-template-columns: 376fr 1108fr; column-gap: 27px; }
.slicers { display: flex; flex-direction: column; }
.slicer { position: relative; padding: 0 18px 0 19px; display: flex; flex-direction: column; }
.slicer label, .slicer h3 { font-family: Roboto, sans-serif; font-weight: 500; padding-left: 4px; }
.slicer .hd { position: absolute; right: 21px; top: 15px; color: #59616b; }
.year { height: 99px; margin-bottom: 38px; padding-top: 14px; }
.year label { font-size: 20px; line-height: 24px; }
.month { height: 99px; margin-bottom: 51px; padding-top: 13px; }
.month label { font-size: 17px; line-height: 22px; }
.pick { position: relative; height: 35px; margin-top: 6px; border: 1px solid #b3b0ad; display: flex; align-items: center; font-size: 18px; }
.month .pick { font-size: 16px; height: 34px; }
.pick select { flex: 1; height: 100%; padding: 4px 6px 0; appearance: none; outline: 0; }
.pick svg { position: absolute; right: 7px; top: 13px; pointer-events: none; }
.terr { height: 108px; margin-bottom: 67px; padding-top: 10px; }
.cat { height: 113px; padding-top: 11px; }
.slicer h3 { font-size: 14px; line-height: 20px; color: #f3e29b; }
.tiles { display: flex; align-items: center; gap: 2px; margin: 2px -4px 0 -3px; height: 59px; color: #74767a; }
.cat .tiles { height: 63px; }
.tiles svg { margin-right: 8px; }
.tiles button { flex: 1; align-self: stretch; background: #333; border: 1px solid #b29a38; color: #fff; line-height: 19px; }
.tiles i { width: 19px; }
.tiles .flip { margin: 0 0 0 8px; }

.charts { display: grid; grid-template-columns: 385fr 401fr 276fr; column-gap: 23px; row-gap: 29px; grid-template-rows: 311px 338px; padding-top: 13px; }
.chart { display: flex; flex-direction: column; overflow: visible; border-color: #d8ca8c; }
.chart h2 { font: 500 20px/24px Roboto, sans-serif; text-align: center; margin-top: 6px; white-space: nowrap; height: 30px; }
.chart h2.big, .chart h2.wide { line-height: 28px; margin-top: 8px; height: 34px; }
.chart h2.big { font-size: 26px; }
.chart h2.wide { font-size: 22px; line-height: 24px; }
.chart h2.pale { color: #f3e29b; }
.chart h2.lead { text-align: left; padding-left: 13px; }
.c-month, .c-terr { margin-top: 2px; }
.c-terr, .c-prod { margin-left: 10px; }
.c-cat { margin: 0 -2px 0 6px; }
.plot { width: 100%; flex: 1 1 0; min-height: 0; }
.plot text { font: 14px "Open Sans", "Noto Sans", sans-serif; fill: #e8d166; }
.plot .end text { text-anchor: end; }
.plot .mid text { text-anchor: middle; }
.plot .axis { font: 500 13px Roboto, sans-serif; }
.plot .dim { font: 500 13px Roboto, sans-serif; fill: #20283c; }
.plot .leg { fill: #605e5c; }
.grid path { fill: none; stroke: #b3b0ad; stroke-dasharray: 1 5; }
.grid.warm path { stroke: #8a8466; }
.treemap {
  flex: 1;
  margin: 0 12px 13px;
  display: grid;
  grid-template: 202fr 83fr / 1fr 1fr;
  gap: 2px;
  border: 1px solid #fff;
  background: #fff;
  color: #fff;
  font-size: 15px;
  white-space: nowrap;
}
.treemap div { padding: 6px 5px; overflow: hidden; }
.t1 { background: #eb895f; }
.t2 { background: #41a4ff; }
.t3 { background: #e1c233; grid-column: span 2; }

/* collapsed panes */
.pane { display: flex; flex-direction: column; align-items: center; padding-top: 14px; }
.pane h2 { writing-mode: vertical-rl; font-weight: 600; font-size: 18px; }
.filters { width: 41px; background: #fff; gap: 18px; border-left: 1px solid #c8c6c4; }
.filters h2 { margin-top: -8px; }
.viz { width: 43px; border: solid #e1dfdd; border-width: 0 1px; gap: 18px; }

/* page tabs */
.pages { height: 44px; display: flex; padding-left: 13px; }
.view { width: 30px; margin-right: 24px; display: grid; place-items: center; border-bottom: 3px solid transparent; height: 38px; }
.view.on { border-bottom-color: #117865; }
.view.phone { margin-right: 9px; }
.arrow { width: 27px; display: grid; place-items: center; }
.page { width: 95px; background: #fff; border-left: 1px solid #a19f9d; border-bottom: 5px solid #117865; text-align: center; line-height: 44px; }
.add { width: 49px; background: #117865; display: grid; place-items: center; padding-bottom: 4px; }
.watermark {
  position: absolute;
  left: 792px;
  bottom: -7px;
  width: 232px;
  display: flex;
  flex-direction: column;
  align-items: center;
  color: rgba(192, 192, 192, .41);
  pointer-events: none;
}
.watermark span { font: bold 65px/76px "DejaVu Sans", sans-serif; }
.watermark b { font: bold 38px/44px "Liberation Sans", sans-serif; }

/* data pane */
.data { width: 225px; position: relative; }
.data header { display: flex; justify-content: space-between; align-items: center; height: 50px; padding: 0 8px 0 12px; }
.data h2 { font-size: 18px; font-weight: 600; }
.find {
  height: 30px;
  margin: 7px 5px 0 7px;
  display: flex;
  align-items: center;
  gap: 8px;
  padding: 0 12px;
  background: #fff;
  border: 1px solid #d2d0ce;
  border-bottom-color: #605e5c;
  border-radius: 4px;
}
.find input { width: 100%; min-width: 0; font-size: 16px; outline: 0; }
.find input::placeholder { color: #605e5c; opacity: 1; }
.tree { padding-top: 12px; }
.tree li { height: 30px; display: flex; align-items: center; padding-left: 17px; white-space: nowrap; }
.tree .kid { padding-left: 56px; }
.tree label { display: flex; align-items: center; }
.ti { width: 18px; height: 18px; margin: 0 5px; flex: none; }
.open, .shut { width: 14px; height: 9px; }
.shut { height: 16px; transform: scaleX(-1); }
.tree input { appearance: none; width: 15px; height: 15px; border: 1px solid #8a8886; border-radius: 2px; margin-right: 4px; }
.tree input:checked { background: #117865; }
.tip {
  position: absolute;
  left: 76px;
  top: -45px;
  width: 75px;
  height: 38px;
  line-height: 38px;
  text-align: center;
  background: #fff;
  border-radius: 3px;
  box-shadow: 0 3px 12px rgba(0, 0, 0, .2);
}
.tip::after { content: ""; position: absolute; left: 24px; top: 38px; border: solid transparent; border-width: 13px 13px 0; border-top-color: #fff; }

/* status bar */
.status { height: 29px; border-top: 1px solid #d8d6d4; display: flex; align-items: center; justify-content: space-between; padding: 3px 20px 0 5px; color: #484644; }
.zoom { display: flex; align-items: center; gap: 7px; }
.zoom input { width: 125px; height: 16px; appearance: none; background: linear-gradient(#605e5c, #605e5c) center / 100% 1px no-repeat; }
.zoom input::-webkit-slider-thumb { appearance: none; width: 5px; height: 14px; background: #605e5c; }
.zoom span { margin: 0 17px 0 10px; }
```
